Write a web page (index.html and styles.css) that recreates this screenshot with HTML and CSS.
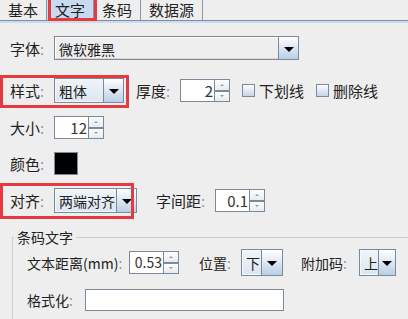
FILE: index.html
```html
<!DOCTYPE html>
<html lang="zh">
<head>
  <meta charset="UTF-8" />
  <title>文字设置</title>
  <link rel="stylesheet" href="styles.css">
</head>
<body>
  <div class="tabs">
    <div class="tab">基本</div>
    <div class="tab active">文字</div>
    <div class="tab">条码</div>
    <div class="tab wide">数据源</div>
  </div>
  <div class="band"></div>

  <div class="content">
    <div class="row r1">
      <span class="lbl">字体<i>:</i></span>
      <div class="combo c-font"><span class="val">微软雅黑</span><span class="btn"><b></b></span></div>
    </div>

    <div class="row r2">
      <span class="lbl">样式<i>:</i></span>
      <div class="combo c-style focus"><span class="val">粗体</span><span class="btn"><b></b></span></div>
      <span class="lbl2 thick-lbl">厚度<i>:</i></span>
      <div class="spin"><span class="field">2</span><span class="arrows"><span class="up"></span><span class="down"></span></span></div>
      <label class="check"><span class="box"></span>下划线</label>
      <label class="check"><span class="box"></span>删除线</label>
    </div>

    <div class="row r3">
      <span class="lbl">大小<i>:</i></span>
      <div class="spin"><span class="field">12</span><span class="arrows"><span class="up"></span><span class="down"></span></span></div>
    </div>

    <div class="row r4">
      <span class="lbl">颜色<i>:</i></span>
      <span class="swatch"></span>
    </div>

    <div class="row r5">
      <span class="lbl">对齐<i>:</i></span>
      <div class="combo c-align focus"><span class="val">两端对齐</span><span class="btn"><b></b></span></div>
      <span class="lbl2 spacing-lbl">字间距<i>:</i></span>
      <div class="spin"><span class="field">0.1</span><span class="arrows"><span class="up"></span><span class="down"></span></span></div>
    </div>

    <fieldset class="group">
      <legend>条码文字</legend>
      <div class="row r6">
        <span class="lbl3">文本距离(mm)<i>:</i></span>
        <div class="spin small"><span class="field">0.53</span><span class="arrows"><span class="up"></span><span class="down"></span></span></div>
        <span class="lbl3 pos-lbl">位置<i>:</i></span>
        <div class="combo c-pos focus"><span class="val">下</span><span class="btn"><b></b></span></div>
        <span class="lbl3 add-lbl">附加码<i>:</i></span>
        <div class="combo c-add focus"><span class="val">上</span><span class="btn"><b></b></span></div>
      </div>
      <div class="row r7">
        <span class="lbl3 fmt-lbl">格式化<i>:</i></span>
        <span class="text-field"></span>
      </div>
    </fieldset>
  </div>

  <!-- annotation boxes -->
  <div class="mark m-tab"></div>
  <div class="mark m-style"></div>
  <div class="mark m-align"></div>
</body>
</html>
```

FILE: styles.css
```css
body {
  margin: 0;
  background: #eeeeee;
  font-family: "Noto Sans CJK SC", "DejaVu Sans", sans-serif;
  font-size: 15px;
  color: #222;
  position: relative;
  overflow: hidden;
  height: 319px;
}

i {
  font-style: normal;
  color: #999;
}

.tabs {
  display: flex;
  height: 20px;
  border-bottom: 1px solid #7d8ea3;
}

.tab {
  width: 30px;
  padding: 0 8px;
  height: 20px;
  line-height: 19px;
  border-right: 1px solid #8a97a8;
  white-space: nowrap;
}

.tab.wide {
  width: 45px;
}

.tab.active {
  background: #c8daef;
}

.band {
  height: 2px;
  background: #cddcec;
}

.content {
  padding-left: 10px;
}

.row {
  display: flex;
  align-items: center;
}

.r1 { margin-top: 13px; height: 24px; }
.r2 { margin-top: 18px; height: 25px; }
.r3 { margin-top: 13px; height: 23px; }
.r4 { margin-top: 13px; height: 23px; }
.r5 { margin-top: 13px; height: 25px; }

.lbl {
  width: 44px;
  flex: none;
  white-space: nowrap;
}

.lbl2 {
  white-space: nowrap;
}

.thick-lbl { margin-left: 12px; width: 44px; }
.spacing-lbl { margin-left: 19px; width: 59px; }

/* combo box */
.combo {
  display: flex;
  height: 100%;
  box-sizing: border-box;
  border: 1px solid #7a8a99;
  font-size: 14px;
}

.combo .val {
  flex: 1;
  padding-left: 3px;
  line-height: 22px;
  border: 1px solid #fff;
  border-right: none;
  border-bottom-color: #d6d6d6;
  background: #eeeeee;
  white-space: nowrap;
}

.combo.focus .val {
  background: linear-gradient(#eef3f8, #dde7f1);
  border-color: #f4f8fc;
}

.combo .btn {
  width: 19px;
  border-left: 1px solid #7a8a99;
  background: linear-gradient(#ffffff, #b9cfe6);
  display: flex;
  align-items: center;
  justify-content: center;
}

.combo .btn b {
  width: 0;
  height: 0;
  border-left: 5px solid transparent;
  border-right: 5px solid transparent;
  border-top: 5px solid #000;
  margin-top: 2px;
  position: relative;
}

.c-font { width: 245px; }
.c-style { width: 70px; }
.c-align { width: 83px; }
.c-pos { width: 42px; height: 27px; }
.c-add { width: 37px; height: 27px; }

.c-pos .btn, .c-add .btn { width: 20px; }
.c-pos .val, .c-add .val { line-height: 24px; }

/* spinner */
.spin {
  display: flex;
  width: 50px;
  height: 23px;
  flex: none;
}

.spin .field {
  flex: 1;
  background: #fff;
  border: 1px solid #7a8a99;
  border-right: none;
  text-align: right;
  padding-right: 1px;
  line-height: 21px;
  font-size: 15px;
  color: #333;
}

.spin .arrows {
  width: 16px;
  display: flex;
  flex-direction: column;
  border: 1px solid #7a8a99;
  box-sizing: border-box;
}

.spin .up, .spin .down {
  flex: 1;
  background: linear-gradient(#fdfdfd, #e6ebf1);
  display: flex;
  align-items: center;
  justify-content: center;
}

.spin .up {
  border-bottom: 2px solid #7a8a99;
}

.spin .up::after, .spin .down::after {
  content: "";
  width: 0;
  height: 0;
  border-left: 2px solid transparent;
  border-right: 2px solid transparent;
}

.spin .up::after { border-bottom: 2px solid #999; }
.spin .down::after { border-top: 2px solid #999; }

.spin.small .field { font-size: 14px; }

.check {
  display: flex;
  align-items: center;
  white-space: nowrap;
  font-size: 15px;
}

.check:first-of-type { margin-left: 12px; }
.check + .check { margin-left: 12px; }

.check .box {
  width: 11px;
  height: 11px;
  border: 1px solid #7a8a99;
  background: linear-gradient(#ffffff, #c3d4e7);
  margin-right: 4px;
}

.swatch {
  width: 22px;
  height: 21px;
  background: #000;
  border: 1px solid #7a8a99;
}

/* titled group */
.group {
  margin: 14px 0 0 2px;
  padding: 0 0 20px 14px;
  border: 1px solid #c2d0de;
  border-right: none;
}

.group legend {
  font-size: 14px;
  line-height: 20px;
  padding: 0 3px;
  margin-left: -13px;
}

.r6 { margin-top: 2px; height: 27px; font-size: 14px; }
.r7 { margin-top: 13px; height: 22px; font-size: 14px; }

.lbl3 {
  white-space: nowrap;
}

.r6 .lbl3:first-child { width: 102px; }
.pos-lbl { margin-left: 20px; width: 42px; }
.add-lbl { margin-left: 18px; width: 58px; }
.fmt-lbl { width: 58px; }

.text-field {
  width: 197px;
  height: 20px;
  background: #fff;
  border: 1px solid #7a8a99;
}

/* red annotation boxes */
.mark {
  position: absolute;
  border: 3px solid #e33b40;
  box-sizing: border-box;
}

.m-tab { left: 48px; top: -3px; width: 49px; height: 24px; }
.m-style { left: 0; top: 75px; width: 129px; height: 33px; }
.m-align { left: 0; top: 183px; width: 134px; height: 36px; }
```
